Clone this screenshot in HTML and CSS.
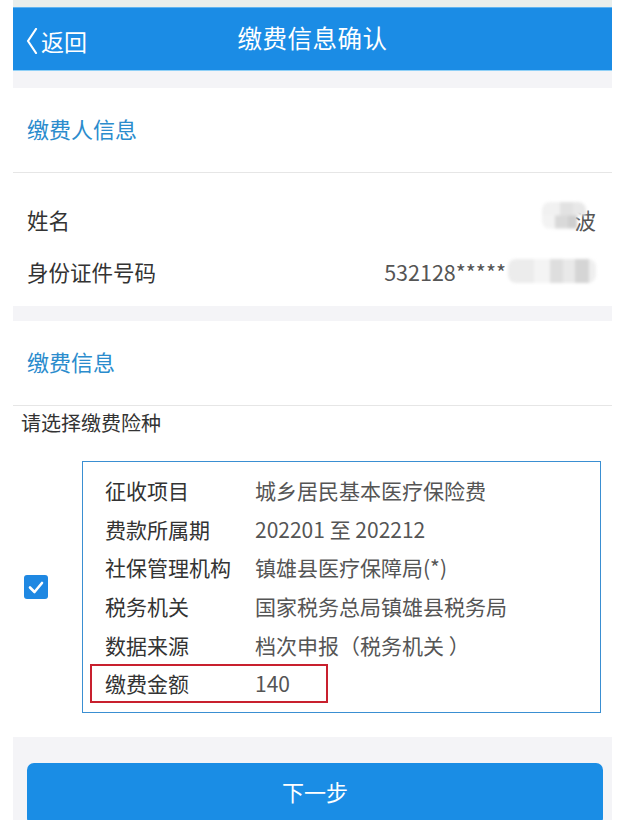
FILE: index.html
```html
<!DOCTYPE html>
<html lang="zh-CN">
<head>
    <meta charset="UTF-8">
    <meta name="viewport" content="width=device-width, initial-scale=1.0">
    <title>缴费信息确认</title>
    <link rel="stylesheet" href="styles.css">
</head>
<body>
    <div class="page">
        <div class="topbar"></div>
        <header class="nav">
            <a class="back">
                <svg width="12" height="26" viewBox="0 0 12 26"><polyline points="10,1 2,13 10,25" fill="none" stroke="#fff" stroke-width="2.2" stroke-linejoin="round" stroke-linecap="round"/></svg>
                <span>返回</span>
            </a>
            <h1>缴费信息确认</h1>
        </header>

        <div class="gap"></div>
        <section class="panel">
            <div class="panel-title">缴费人信息</div>
            <div class="info-list">
                <div class="info-row">
                    <span class="label">姓名</span>
                    <span class="value"><span class="mosaic mosaic-name"></span>波</span>
                </div>
                <div class="info-row">
                    <span class="label">身份证件号码</span>
                    <span class="value">532128*****<span class="mosaic mosaic-id"></span></span>
                </div>
            </div>
        </section>

        <div class="gap gap-sm"></div>
        <section class="panel panel-pay">
            <div class="panel-title">缴费信息</div>
            <div class="pick-title">请选择缴费险种</div>
            <div class="pick">
                <div class="check">
                    <svg width="24" height="24" viewBox="0 0 24 24"><rect width="24" height="24" rx="3" fill="#1f88e2"/><polyline points="6,12.5 10.5,17 18,8" fill="none" stroke="#fff" stroke-width="2.6" stroke-linecap="round" stroke-linejoin="round"/></svg>
                </div>
                <div class="item">
                    <div class="item-row"><span class="k">征收项目</span><span class="v">城乡居民基本医疗保险费</span></div>
                    <div class="item-row"><span class="k">费款所属期</span><span class="v">202201 至 202212</span></div>
                    <div class="item-row"><span class="k">社保管理机构</span><span class="v">镇雄县医疗保障局(*)</span></div>
                    <div class="item-row"><span class="k">税务机关</span><span class="v">国家税务总局镇雄县税务局</span></div>
                    <div class="item-row"><span class="k">数据来源</span><span class="v">档次申报（税务机关 ）</span></div>
                    <div class="item-row marked"><span class="k">缴费金额</span><span class="v">140</span></div>
                </div>
            </div>
        </section>

        <div class="footer">
            <button class="next">下一步</button>
        </div>
    </div>
</body>
</html>
```

FILE: styles.css
```css
/* 缴费信息确认 */
body {
    margin: 0;
    background: #fff;
    font-family: "Noto Sans CJK SC", "Noto Sans", sans-serif;
    color: #333;
}
.page {
    margin: 0 12px 0 13px;
    height: 820px;
    overflow: hidden;
    background: #f4f4f7;
}
.topbar {
    height: 7px;
    background: #e9eeec;
}
.nav {
    height: 62px;
    background: #1b8ce5;
    border-top: 1px solid #5fb3f0;
    border-bottom: 1px solid #8fd0f7;
    display: flex;
    align-items: center;
    justify-content: center;
    position: relative;
}
.nav h1 {
    margin: 0 0 4px;
    font-size: 24.5px;
    font-weight: 400;
    color: #fff;
    letter-spacing: 0.5px;
}
.back {
    position: absolute;
    left: 13px;
    top: 16px;
    display: flex;
    align-items: center;
    gap: 3px;
    color: #fff;
    font-size: 23px;
}
.gap {
    height: 17px;
}
.gap-sm {
    height: 15px;
}
.panel {
    background: #fff;
}
.panel-title {
    height: 84px;
    line-height: 80px;
    padding-left: 14px;
    font-size: 22px;
    color: #2b8ccd;
    border-bottom: 1px solid #e6e6e6;
}
.info-list {
    padding: 20px 0 9px;
}
.info-row {
    height: 52px;
    display: flex;
    align-items: center;
    justify-content: space-between;
    padding: 0 16px 0 14px;
    font-size: 21.5px;
}
.info-row .label {
    color: #333;
}
.info-row .value {
    color: #555;
    display: flex;
    align-items: center;
}
.mosaic {
    display: inline-block;
    filter: blur(1.5px);
    border-radius: 8px;
}
.mosaic-name {
    width: 44px;
    height: 27px;
    margin-right: -12px;
    margin-top: -8px;
    position: relative;
    z-index: 1;
    background:
        linear-gradient(90deg, #f1f1f1 0 40%, #e2e2e2 40% 70%, #e8e8e8 70%) top / 100% 50% no-repeat,
        linear-gradient(90deg, #f3f3f3 0 30%, #d9d9d9 30% 60%, #cfcfcf 60% 80%, transparent 80%) bottom / 100% 50% no-repeat;
}
.mosaic-id {
    width: 88px;
    height: 24px;
    margin-left: 2px;
    background: linear-gradient(90deg, #ececec 0 30%, #f4f4f4 30% 48%, #dedede 48% 62%, #e9e9e9 62% 76%, #d5d5d5 76% 92%, #efefef 92%);
}
.panel-pay {
    padding-bottom: 24px;
}
.pick-title {
    padding: 2px 0 0 8px;
    height: 35px;
    line-height: 30px;
    font-size: 20px;
    color: #333;
}
.pick {
    display: flex;
    align-items: center;
    margin-top: 18px;
}
.check {
    box-sizing: border-box;
    width: 69px;
    padding-left: 11px;
    display: flex;
    align-items: center;
}
.check svg {
    display: block;
}
.item {
    flex: 1;
    margin-right: 11px;
    border: 1.5px solid #3a8fd2;
    padding: 9px 0;
}
.item-row {
    display: flex;
    height: 38.6px;
    align-items: center;
    font-size: 21px;
    padding-left: 22px;
    position: relative;
}
.item-row .k {
    width: 150px;
    color: #333;
    flex-shrink: 0;
}
.item-row .v {
    color: #555;
}
.marked::after {
    content: "";
    position: absolute;
    left: 7px;
    top: 0;
    width: 234px;
    height: 35px;
    border: 2px solid #c8202e;
}
.footer {
    padding: 26px 9px 0 14px;
}
.next {
    display: block;
    width: 100%;
    height: 62px;
    border: 0;
    border-radius: 7px;
    background: #1a8de5;
    color: #fff;
    font-family: "Noto Sans CJK SC", "Noto Sans", sans-serif;
    font-size: 22px;
    padding-bottom: 6px;
}
```
